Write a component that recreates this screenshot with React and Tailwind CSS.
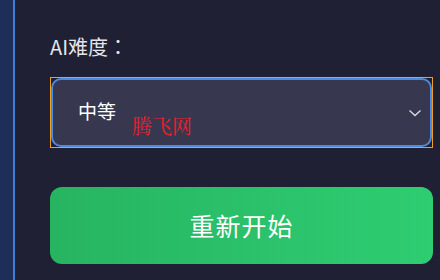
import React from "react";

export default function App() {
  return (
    <div
      className="flex w-[440px] h-[280px] overflow-hidden bg-[#1f2034]"
      style={{ fontFamily: '"Noto Sans CJK SC", "Noto Sans", sans-serif' }}
    >
      <div className="w-[15px] shrink-0 bg-[#1d2f58] border-r-2 border-[#3d7fd8]" />
      <div className="flex flex-col pl-[35px] pt-[33px]">
        <div
          className="text-[20px] leading-[28px] text-[#e4e4ea]"
          style={{ fontFamily: '"Noto Sans CJK TC", "Noto Sans CJK SC", sans-serif' }}
        >
          AI难度：
        </div>
        <div className="relative mt-[16px] w-[383px] h-[71px] border border-[#f0a020]">
          <div className="flex items-center justify-between w-full h-full rounded-[10px] border-2 border-[#4a8ae0] bg-[#373850] pl-[25px] pr-[8px]">
            <span className="text-[19px] text-white leading-none -mt-[4px]">中等</span>
            <svg width="14" height="10" viewBox="0 0 14 10">
              <path d="M1.5 2.5 L7 7.5 L12.5 2.5" fill="none" stroke="#d8d8e0" strokeWidth="1.4" />
            </svg>
          </div>
          <span
            className="absolute left-[81px] top-[38px] text-[20px] leading-none text-[#e8222c]"
            style={{ fontFamily: '"Noto Serif CJK SC", "Noto Sans CJK SC", serif' }}
          >
            腾飞网
          </span>
        </div>
        <button className="mt-[39px] w-[383px] h-[77px] rounded-[12px] bg-gradient-to-r from-[#27b461] to-[#2ecd72] text-white text-[25px] tracking-[1px]">
          重新开始
        </button>
      </div>
    </div>
  );
}
